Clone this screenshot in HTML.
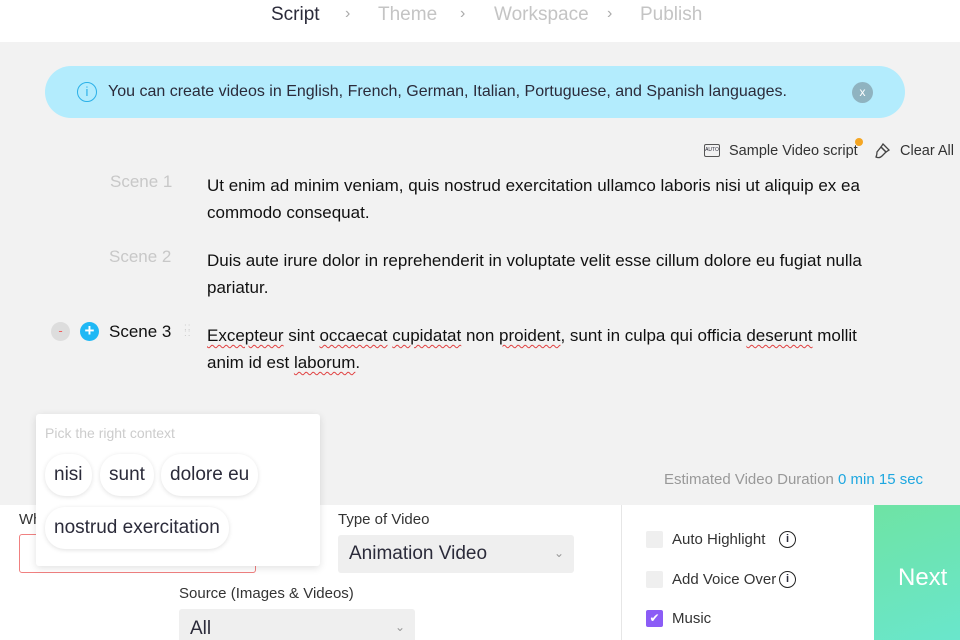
<!DOCTYPE html>
<html><head><style>
*{margin:0;padding:0;box-sizing:border-box}
html,body{width:960px;height:640px;overflow:hidden}
body{background:#f2f2f2;font-family:"Liberation Sans",sans-serif;position:relative;color:#2b2b3a}
.abs{position:absolute}
.top{left:0;top:0;width:960px;height:42px;background:#fff}
.step{top:4px;font-size:19px;color:#c4c4c4}
.chev{top:5px;font-size:16px;color:#aaa}
.banner{left:45px;top:66px;width:860px;height:52px;background:#b3ecfd;border-radius:26px}
.scn{font-size:17px;color:#c8c8c8}
.txt{left:207px;width:682px;font-size:17px;line-height:27px;color:#111}
.sp{text-decoration:underline wavy #e04040;text-decoration-thickness:1px;text-underline-offset:3px}
.chip{position:absolute;background:#fff;border-radius:20px;box-shadow:0 1px 5px rgba(0,0,0,.12);height:42px;line-height:42px;padding:0 9px;font-size:19px;color:#2b2b3a}
.lbl{font-size:15px;color:#333}
.sel{background:#efefef;border-radius:3px}
.cb{width:17px;height:17px;background:#efefef;border-radius:2px}
.info{width:17px;height:17px;border:1.5px solid #222;border-radius:50%;font-size:11px;text-align:center;line-height:14px;font-weight:bold}
</style></head><body>
<div class="abs top"></div>
<div class="abs step" style="left:271px;color:#2b2b3a">Script</div>
<div class="abs chev" style="left:345px">›</div>
<div class="abs step" style="left:378px">Theme</div>
<div class="abs chev" style="left:460px">›</div>
<div class="abs step" style="left:494px">Workspace</div>
<div class="abs chev" style="left:607px">›</div>
<div class="abs step" style="left:640px">Publish</div>

<div class="abs banner"></div>
<div class="abs" style="left:77px;top:82px;width:20px;height:20px;border:1.5px solid #2bb0e8;border-radius:50%;color:#2bb0e8;font-size:13px;text-align:center;line-height:17px">i</div>
<div class="abs" style="left:108px;top:83px;font-size:16px;color:#2b2b3a">You can create videos in English, French, German, Italian, Portuguese, and Spanish languages.</div>
<div class="abs" style="left:852px;top:82px;width:21px;height:21px;border-radius:50%;background:#8fb3c0;color:#fff;font-size:12px;text-align:center;line-height:20px">x</div>

<div class="abs" style="left:704px;top:144px;width:16px;height:13px;border:1.5px solid #555;border-radius:2px;font-size:5px;line-height:10px;text-align:center">AUTO</div>
<div class="abs" style="left:729px;top:143px;font-size:14.5px;color:#333">Sample Video script</div>
<div class="abs" style="left:855px;top:138px;width:8px;height:8px;border-radius:50%;background:#f5a623"></div>
<svg class="abs" style="left:873px;top:142px" width="18" height="18" viewBox="0 0 18 18" fill="none" stroke="#444" stroke-width="1.3"><path d="M10 2l6 6-3 2-5-5z"/><path d="M8 5l5 5-4 4c-2 2-4 2-6 1 1-2 1-4 1-5z"/></svg>
<div class="abs" style="left:900px;top:143px;font-size:14.5px;color:#333">Clear All</div>

<div class="abs scn" style="left:110px;top:172px">Scene 1</div>
<div class="abs txt" style="top:172px">Ut enim ad minim veniam, quis nostrud exercitation ullamco laboris nisi ut aliquip ex ea commodo consequat.</div>
<div class="abs scn" style="left:109px;top:247px">Scene 2</div>
<div class="abs txt" style="top:247px">Duis aute irure dolor in reprehenderit in voluptate velit esse cillum dolore eu fugiat nulla pariatur.</div>
<div class="abs" style="left:51px;top:322px;width:19px;height:19px;border-radius:50%;background:#ddd;color:#f06060;font-size:13px;text-align:center;line-height:18px">-</div>
<div class="abs" style="left:80px;top:322px;width:19px;height:19px;border-radius:50%;background:#1fb8f5;color:#fff;font-size:17px;font-weight:bold;text-align:center;line-height:18px">+</div>
<div class="abs" style="left:109px;top:322px;font-size:17px;color:#111">Scene 3</div>
<div class="abs" style="left:184px;top:325px;font-size:10px;color:#ccc;line-height:6px;letter-spacing:1px">::<br>::</div>
<div class="abs txt" style="top:322px"><span class="sp">Excepteur</span> sint <span class="sp">occaecat</span> <span class="sp">cupidatat</span> non <span class="sp">proident</span>, sunt in culpa qui officia <span class="sp">deserunt</span> mollit anim id est <span class="sp">laborum</span>.</div>

<div class="abs" style="left:664px;top:471px;font-size:15px;color:#999">Estimated Video Duration <span style="color:#1ea7e0">0 min 15 sec</span></div>

<div class="abs" style="left:0;top:505px;width:960px;height:135px;background:#fff"></div>
<div class="abs" style="left:621px;top:505px;width:1px;height:135px;background:#e6e6e6"></div>
<div class="abs lbl" style="left:19px;top:511px">What</div>
<div class="abs" style="left:19px;top:534px;width:237px;height:39px;border:1px solid #f08080;border-radius:3px"></div>
<div class="abs lbl" style="left:338px;top:511px">Type of Video</div>
<div class="abs sel" style="left:338px;top:535px;width:236px;height:38px"></div>
<div class="abs" style="left:349px;top:543px;font-size:19px;color:#2b2b3a">Animation Video</div>
<div class="abs" style="left:554px;top:546px;font-size:12px;color:#999">⌄</div>
<div class="abs lbl" style="left:179px;top:585px">Source (Images &amp; Videos)</div>
<div class="abs sel" style="left:179px;top:609px;width:236px;height:31px;border-radius:3px 3px 0 0"></div>
<div class="abs" style="left:190px;top:618px;font-size:19px;color:#2b2b3a">All</div>
<div class="abs" style="left:395px;top:620px;font-size:12px;color:#999">⌄</div>

<div class="abs cb" style="left:646px;top:531px"></div>
<div class="abs lbl" style="left:672px;top:531px">Auto Highlight</div>
<div class="abs info" style="left:779px;top:531px">i</div>
<div class="abs cb" style="left:646px;top:571px"></div>
<div class="abs lbl" style="left:672px;top:571px">Add Voice Over</div>
<div class="abs info" style="left:779px;top:571px">i</div>
<div class="abs cb" style="left:646px;top:610px;background:#8b5cf6;color:#fff;font-size:12px;text-align:center;line-height:17px">✔</div>
<div class="abs lbl" style="left:672px;top:610px">Music</div>

<div class="abs" style="left:874px;top:505px;width:86px;height:135px;background:linear-gradient(160deg,#6ee3a4,#6ae6cc)"></div>
<div class="abs" style="left:898px;top:564px;font-size:24px;color:#fff">Next</div>

<div class="abs" style="left:36px;top:414px;width:284px;height:152px;background:#fff;border-radius:3px;box-shadow:0 2px 8px rgba(0,0,0,.12)"></div>
<div class="abs" style="left:45px;top:425px;font-size:14px;color:#ccc">Pick the right context</div>
<div class="chip" style="left:45px;top:454px">nisi</div>
<div class="chip" style="left:100px;top:454px">sunt</div>
<div class="chip" style="left:161px;top:454px">dolore eu</div>
<div class="chip" style="left:45px;top:507px">nostrud exercitation</div>
</body></html>
